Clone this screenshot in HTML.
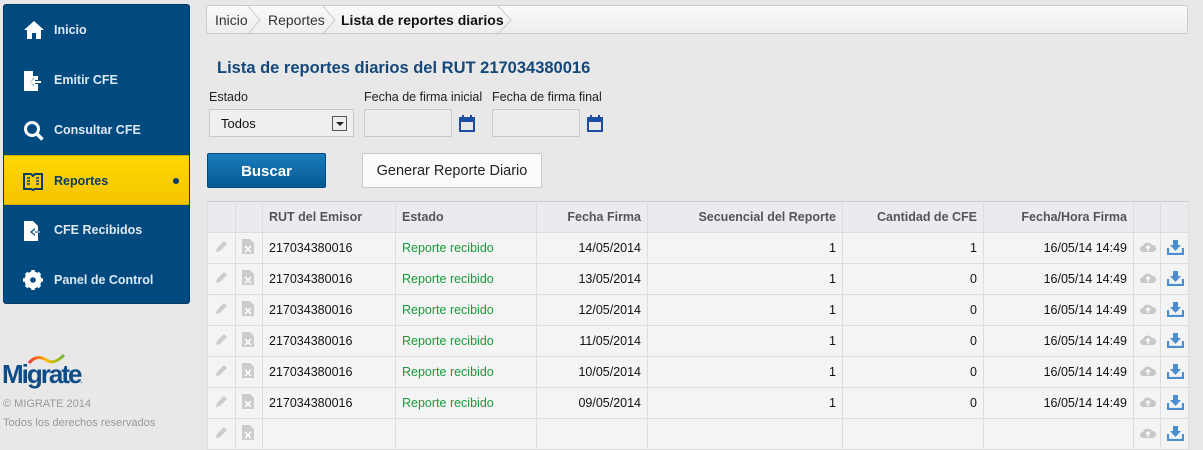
<!DOCTYPE html>
<html><head><meta charset="utf-8"><style>
*{margin:0;padding:0;box-sizing:border-box}
body{width:1203px;height:426px;overflow:hidden;background:#e8e8e8;font-family:"Liberation Sans",Arial,sans-serif;position:relative;font-size:13px;color:#111}
.side{position:absolute;left:3px;top:4px;width:187px;height:300px;background:#004a7f;border:1px solid #003a66;border-radius:3px}
.it{position:absolute;left:0;width:185px;height:50px;color:#dfe9f3;font-weight:bold;font-size:12.5px;line-height:50px;padding-left:50px}
.it svg{position:absolute;left:19px;top:15px}
.act{background:linear-gradient(#ffd800,#f5c400);color:#0a3b6c;border-top:1px solid #d8a900;border-bottom:1px solid #d8a900}
.dot{position:absolute;left:169px;top:22px;width:6px;height:6px;border-radius:3px;background:#0a3b6c}
.bc{position:absolute;left:206px;top:5px;width:982px;height:29px;background:linear-gradient(#fafafa,#eee);border:1px solid #ccc;border-radius:2px;font-size:14px;line-height:28px;color:#333}
.bc span{position:absolute;top:0}
h1{position:absolute;left:217px;top:59px;font-size:16.5px;color:#14477a;font-weight:bold}
.lbl{position:absolute;top:90px;font-size:12.5px;color:#222}
.inp{position:absolute;top:109px;height:28px;background:#ececec;border:1px solid #c8c8c8}
.btn{position:absolute;top:153px;height:35px;border-radius:2px;font-size:15px;text-align:center;line-height:35px}
table{position:absolute;left:207px;top:201px;width:981px;border-collapse:collapse;background:#f4f4f4;border:1px solid #ccc;table-layout:fixed}
td,th{height:31px;border:1px solid #ddd;border-top:none;font-size:12.5px;padding:0 6px;white-space:nowrap}
th{background:#e9ebef;color:#555;font-weight:bold;height:31px;border-bottom:1px solid #ddd}
.r{text-align:right}.g{color:#179a3a}
</style></head><body>
<div class="side">
<div class="it" style="top:0"><svg width="22" height="20" viewBox="0 0 22 20"><path d="M11 1L1 10h3v9h5v-6h4v6h5v-9h3z" fill="#fff"/></svg>Inicio</div>
<div class="it" style="top:50px"><svg width="20" height="22" viewBox="0 0 20 22"><path d="M1 1h9l5 5v4h-3l-1-2-4 4 4 4 1-2h3v7H1z M10 1v5h5" fill="#fff"/><path d="M12 8v3h6v2h-6v3l-5-4z" fill="#fff"/></svg>Emitir CFE</div>
<div class="it" style="top:100px"><svg width="22" height="22" viewBox="0 0 22 22"><circle cx="9" cy="9" r="6.5" fill="none" stroke="#fff" stroke-width="3"/><path d="M13.5 13.5l6 6" stroke="#fff" stroke-width="3.5"/></svg>Consultar CFE</div>
<div class="it act" style="top:150px"><svg width="20" height="20" viewBox="0 0 20 20"><path d="M1 3h7l2 2 2-2h7v15h-7l-2 1-2-1H1z" fill="none" stroke="#0a3b6c" stroke-width="2"/><path d="M4 7h3M4 10h3M4 13h3M13 7h3M13 10h3M13 13h3" stroke="#0a3b6c" stroke-width="1.6"/></svg>Reportes<span class="dot"></span></div>
<div class="it" style="top:200px"><svg width="20" height="22" viewBox="0 0 20 22"><path d="M1 1h9l5 5v15H1z" fill="#fff"/><path d="M18 11h-6v-3l-5 4 5 4v-3h6z" fill="#004a7f"/><path d="M17 11.5h-5v-2l-3 2.5 3 2.5v-2h5z" fill="#fff"/></svg>CFE Recibidos</div>
<div class="it" style="top:250px"><svg width="20" height="20" viewBox="0 0 20 20"><circle cx="10" cy="10" r="6.5" fill="none" stroke="#fff" stroke-width="4"/><path d="M10 0v20M0 10h20M3 3l14 14M17 3L3 17" stroke="#fff" stroke-width="3.5"/><circle cx="10" cy="10" r="2.8" fill="#004a7f"/></svg>Panel de Control</div>
</div>
<svg style="position:absolute;left:28px;top:353px" width="38" height="12"><path d="M1 10C8 2 14 4 20 8 26 11 32 6 36 2" fill="none" stroke="url(#gr)" stroke-width="3"/><defs><linearGradient id="gr"><stop offset="0" stop-color="#e33"/><stop offset=".5" stop-color="#fb0"/><stop offset="1" stop-color="#6b3"/></linearGradient></defs></svg>
<div style="position:absolute;left:2px;top:359px;font-size:26px;font-weight:bold;color:#0d4c86;letter-spacing:-2px">Migrate<span style="font-size:6px">.</span></div>
<div style="position:absolute;left:3px;top:398px;font-size:11px;color:#999">© MIGRATE 2014</div>
<div style="position:absolute;left:3px;top:417px;font-size:11px;color:#999">Todos los derechos reservados</div>
<div class="bc"><span style="left:8px">Inicio</span><span style="left:61px">Reportes</span><span style="left:134px;font-weight:bold;color:#111">Lista de reportes diarios</span>
<svg style="position:absolute;left:40px;top:-1px" width="270" height="30"><path d="M0 0l13 15L0 30M75 0l13 15L75 30" fill="none" stroke="#ccc"/><path d="M250 0l14 15-14 15" fill="none" stroke="#ccc"/></svg></div>
<h1>Lista de reportes diarios del RUT 217034380016</h1>
<div class="lbl" style="left:209px">Estado</div>
<div class="lbl" style="left:364px">Fecha de firma inicial</div>
<div class="lbl" style="left:492px">Fecha de firma final</div>
<div class="inp" style="left:209px;width:145px;background:#efefef;font-size:13px;line-height:27px;padding-left:11px">Todos<span style="position:absolute;right:6px;top:6px;width:15px;height:15px;border:1px solid #555;background:#eee"><span style="position:absolute;left:3px;top:5px;border:4px solid transparent;border-top:4px solid #222"></span></span></div>
<div class="inp" style="left:364px;width:88px"></div>
<div class="inp" style="left:492px;width:88px"></div>
<svg style="position:absolute;left:459px;top:115px" width="16" height="17"><rect x="1" y="3" width="14" height="13" fill="none" stroke="#1b4ea0" stroke-width="2"/><rect x="1" y="3" width="14" height="4" fill="#1b4ea0"/><path d="M4 0v4M12 0v4" stroke="#1b4ea0" stroke-width="2"/></svg>
<svg style="position:absolute;left:587px;top:115px" width="16" height="17"><rect x="1" y="3" width="14" height="13" fill="none" stroke="#1b4ea0" stroke-width="2"/><rect x="1" y="3" width="14" height="4" fill="#1b4ea0"/><path d="M4 0v4M12 0v4" stroke="#1b4ea0" stroke-width="2"/></svg>
<div class="btn" style="left:207px;width:119px;background:linear-gradient(#1a7cbb,#045a94);color:#fff;font-weight:bold;border:1px solid #044a7a">Buscar</div>
<div class="btn" style="left:362px;width:180px;background:#fbfbfb;border:1px solid #c8c8c8;color:#222;font-size:14.5px">Generar Reporte Diario</div>
<table>
<colgroup><col style="width:28px"><col style="width:27px"><col style="width:133px"><col style="width:141px"><col style="width:111px"><col style="width:195px"><col style="width:141px"><col style="width:150px"><col style="width:27px"><col style="width:28px"></colgroup>
<tr><th></th><th></th><th style="text-align:left">RUT del Emisor</th><th style="text-align:left">Estado</th><th class="r">Fecha Firma</th><th class="r">Secuencial del Reporte</th><th class="r">Cantidad de CFE</th><th class="r">Fecha/Hora Firma</th><th></th><th></th></tr>
<tbody id="b"></tbody>
</table>
<script>
var d=[["14/05/2014",1],["13/05/2014",0],["12/05/2014",0],["11/05/2014",0],["10/05/2014",0],["09/05/2014",0],["",""]];
var pen='<svg width="14" height="14"><path d="M2 12l1-4 7-7 3 3-7 7z" fill="#ccc"/></svg>';
var x='<svg width="12" height="15"><path d="M0 0h8l4 4v11H0z" fill="#ccc"/><path d="M3 7l6 6M9 7l-6 6" stroke="#fff" stroke-width="1.5"/></svg>';
var cl='<svg width="16" height="12"><path d="M3 11a3 3 0 010-6 5 5 0 019-1 3.5 3.5 0 011 7z" fill="#c8c8c8"/><path d="M8 5v5M6 7l2-2 2 2" stroke="#fff" stroke-width="1.4" fill="none"/></svg>';
var dl='<svg width="17" height="16"><path d="M1 9v6h15V9" fill="none" stroke="#4a8ed0" stroke-width="2.2"/><path d="M6 1h5v5h3l-5.5 6L3 6h3z" fill="#4a8ed0"/></svg>';
var h='';d.forEach(function(r){h+='<tr><td>'+pen+'</td><td>'+x+'</td><td>'+(r[0]?'217034380016':'')+'</td><td class="g">'+(r[0]?'Reporte recibido':'')+'</td><td class="r">'+r[0]+'</td><td class="r">'+(r[0]?1:'')+'</td><td class="r">'+r[1]+'</td><td class="r">'+(r[0]?'16/05/14 14:49':'')+'</td><td>'+cl+'</td><td>'+dl+'</td></tr>'});
document.getElementById('b').innerHTML=h;
</script>
</body></html>
